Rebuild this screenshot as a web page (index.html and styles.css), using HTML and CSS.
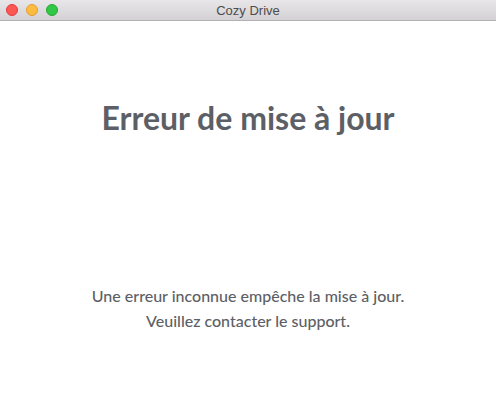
FILE: index.html
```html
<!DOCTYPE html>
<html lang="fr">
<head>
  <meta charset="UTF-8" />
  <title>Cozy Drive</title>
  <link rel="stylesheet" href="styles.css">
</head>
<body>
  <div class="titlebar">
    <div class="lights">
      <span class="light close"></span>
      <span class="light min"></span>
      <span class="light max"></span>
    </div>
    <div class="title">Cozy Drive</div>
  </div>

  <div class="content">
    <h1>Erreur de mise à jour</h1>
    <p>Une erreur inconnue empêche la mise à jour.<br>Veuillez contacter le support.</p>
  </div>
</body>
</html>
```

FILE: styles.css
```css
body {
  margin: 0;
  background-color: #fff;
  height: 100vh;
  display: flex;
  flex-direction: column;
  overflow: hidden;
}
.titlebar {
  height: 20px;
  background: linear-gradient(#e8e6e8, #d3d1d3);
  border-bottom: 1px solid #b3b1b3;
  position: relative;
  display: flex;
  align-items: center;
  justify-content: center;
}
.lights {
  position: absolute;
  left: 6px;
  top: 4px;
  display: flex;
  gap: 8px;
}
.light {
  width: 12px;
  height: 12px;
  border-radius: 50%;
  box-sizing: border-box;
}
.light.close {
  background-color: #fc5753;
  border: 1px solid #df3d3a;
}
.light.min {
  background-color: #fdbc40;
  border: 1px solid #de9f33;
}
.light.max {
  background-color: #33c748;
  border: 1px solid #26a834;
}
.title {
  font-family: "Liberation Sans", Arial, sans-serif;
  font-size: 13px;
  color: #4d4d4d;
}
.content {
  flex: 1;
  display: flex;
  flex-direction: column;
  align-items: center;
  font-family: Lato, sans-serif;
  color: #5d5f66;
  text-align: center;
}
.content h1 {
  margin: 77px 0 0;
  font-size: 32px;
  font-weight: 700;
  line-height: 40px;
}
.content p {
  margin: 145px 0 0;
  font-size: 16px;
  font-weight: 500;
  line-height: 25px;
}
```
